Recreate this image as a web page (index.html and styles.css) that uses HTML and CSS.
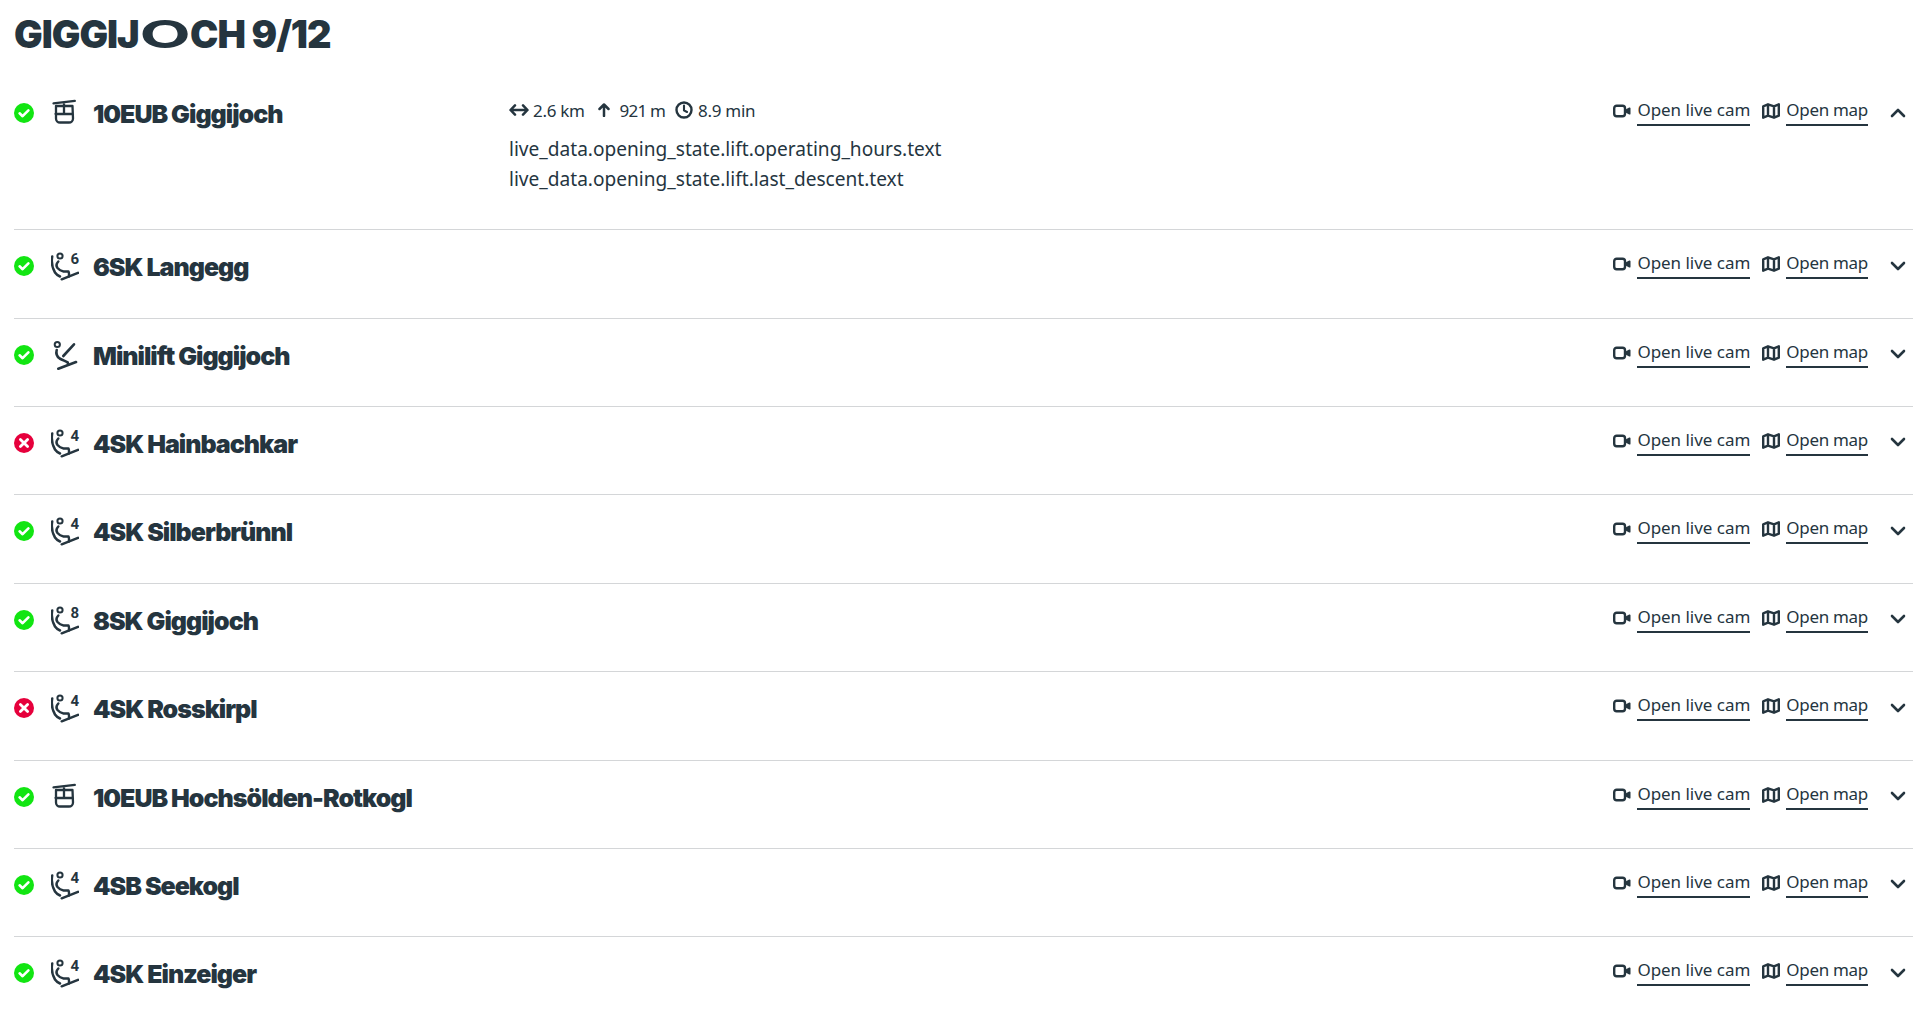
FILE: index.html
```html
<!DOCTYPE html>
<html lang="en">
<head>
<meta charset="utf-8">
<title>Giggijoch</title>
<link rel="stylesheet" href="styles.css">
</head>
<body>
<svg class="defs" width="0" height="0" aria-hidden="true">
  <symbol id="ok" viewBox="0 0 20 20"><circle cx="10" cy="10" r="10" fill="#12e512"/><path d="M5.600 10.300l3 2.900 5.800-5.800" fill="none" stroke="#fff" stroke-width="2.600" stroke-linecap="round" stroke-linejoin="round"/></symbol>
  <symbol id="no" viewBox="0 0 20 20"><circle cx="10" cy="10" r="10" fill="#e6003c"/><path d="M6.400 6.400l7.200 7.200M13.600 6.400l-7.200 7.200" fill="none" stroke="#fff" stroke-width="2.800" stroke-linecap="round"/></symbol>
  <symbol id="gondola" viewBox="0 0 28 30"><g fill="none" stroke="#25353f" stroke-width="2.300" stroke-linecap="round" stroke-linejoin="round"><path d="M2.500 5.400L23.800 2.900M13 4.500V16M5 8h16.500l.5 12.500a4 4 0 0 1-4 4h-9a4 4 0 0 1-4-4zM4.500 16H22"/></g></symbol>
  <symbol id="chair" viewBox="0 0 28 30"><g fill="none" stroke="#25353f" stroke-width="2.500" stroke-linecap="round" stroke-linejoin="round"><circle cx="9" cy="5" r="2.600" stroke-width="2"/><path d="M1.200 5.500C.2 11 .8 16 4 21.500c1.200 1.800 2.800 3 5 4"/><path d="M7.300 10.500C5.500 12.500 5 15 6.500 17c1.500 1.800 4 3 6 3.400l5 .1c.6 1.200.7 3 .5 5"/><path d="M10.700 28.300L27 21.800"/></g></symbol>
  <symbol id="mini" viewBox="0 0 28 30"><g fill="none" stroke="#25353f" stroke-width="2.600" stroke-linecap="round" stroke-linejoin="round"><circle cx="6.300" cy="4.500" r="2.600" stroke-width="2"/><path d="M5.700 10c-.8 3 .2 6.500 3 8.500 2.800 1.500 5.500 2.500 8 3.800l.5 2.500"/><path d="M23 4.300L12.300 16"/><path d="M7.300 28.700L25 22"/></g></symbol>
  <symbol id="cam" viewBox="0 0 18 14"><rect x="1.200" y="1.700" width="10.800" height="10.600" rx="2.500" fill="none" stroke="#25353f" stroke-width="2.400"/><path d="M13 5.200l3.200-1.700a1 1 0 0 1 1.300.8v5.400a1 1 0 0 1-1.300.8L13 8.800z" fill="#25353f"/></symbol>
  <symbol id="map" viewBox="0 0 18 16"><path d="M1.200 3.300l4.800-2 6 2 4.800-2v11.400l-4.800 2-6-2-4.800 2zM6 1.500v11.200M12 3.500v11" fill="none" stroke="#25353f" stroke-width="2.400" stroke-linejoin="round"/></symbol>
  <symbol id="up" viewBox="0 0 16 10"><path d="M2 8l6-6 6 6" fill="none" stroke="#25353f" stroke-width="2.600" stroke-linecap="round" stroke-linejoin="round"/></symbol>
  <symbol id="down" viewBox="0 0 16 10"><path d="M2 2l6 6 6-6" fill="none" stroke="#25353f" stroke-width="2.600" stroke-linecap="round" stroke-linejoin="round"/></symbol>
</svg>
<main class="page">
  <h1 class="title">GIGGIJ<span class="wide-o">O</span>CH 9/12</h1>
  <ul class="lifts">
    <li class="lift lift-open">
      <div class="signs"><svg class="status"><use href="#ok"/></svg><svg class="kind"><use href="#gondola"/></svg></div>
      <h2 class="name">10EUB Giggijoch</h2>
      <div class="details">
        <div class="stats">
          <span class="stat"><svg class="stat-icon" viewBox="0 0 20 14"><path d="M6 2.300L1.500 7 6 11.700M14 2.300L18.500 7 14 11.700M2 7h16" fill="none" stroke="#25353f" stroke-width="2.500" stroke-linecap="round" stroke-linejoin="round"/></svg>2.6 km</span>
          <span class="stat stat-wide"><svg class="stat-icon stat-up" viewBox="0 0 14 14"><path d="M2.500 6L7 1.500 11.500 6M7 2v11" fill="none" stroke="#25353f" stroke-width="2.500" stroke-linecap="round" stroke-linejoin="round"/></svg>921 m</span>
          <span class="stat stat-time"><svg class="stat-icon stat-clock" viewBox="0 0 18 18"><circle cx="9" cy="9" r="7.500" fill="none" stroke="#25353f" stroke-width="2.400"/><path d="M9 4.500v4.800l3 1.700" fill="none" stroke="#25353f" stroke-width="2.100" stroke-linecap="round"/></svg>8.9 min</span>
        </div>
        <p class="note">live_data.opening_state.lift.operating_hours.text</p>
        <p class="note">live_data.opening_state.lift.last_descent.text</p>
      </div>
      <div class="actions"><svg class="cam"><use href="#cam"/></svg><a class="link link-cam">Open live cam</a><svg class="map"><use href="#map"/></svg><a class="link">Open map</a><svg class="chev"><use href="#up"/></svg></div>
    </li>
    <li class="lift">
      <div class="signs"><svg class="status"><use href="#ok"/></svg><span class="kind-wrap"><svg class="kind"><use href="#chair"/></svg><b class="seats">6</b></span></div>
      <h2 class="name">6SK Langegg</h2><div class="details"></div>
      <div class="actions"><svg class="cam"><use href="#cam"/></svg><a class="link link-cam">Open live cam</a><svg class="map"><use href="#map"/></svg><a class="link">Open map</a><svg class="chev"><use href="#down"/></svg></div>
    </li>
    <li class="lift">
      <div class="signs"><svg class="status"><use href="#ok"/></svg><svg class="kind"><use href="#mini"/></svg></div>
      <h2 class="name">Minilift Giggijoch</h2><div class="details"></div>
      <div class="actions"><svg class="cam"><use href="#cam"/></svg><a class="link link-cam">Open live cam</a><svg class="map"><use href="#map"/></svg><a class="link">Open map</a><svg class="chev"><use href="#down"/></svg></div>
    </li>
    <li class="lift">
      <div class="signs"><svg class="status"><use href="#no"/></svg><span class="kind-wrap"><svg class="kind"><use href="#chair"/></svg><b class="seats">4</b></span></div>
      <h2 class="name">4SK Hainbachkar</h2><div class="details"></div>
      <div class="actions"><svg class="cam"><use href="#cam"/></svg><a class="link link-cam">Open live cam</a><svg class="map"><use href="#map"/></svg><a class="link">Open map</a><svg class="chev"><use href="#down"/></svg></div>
    </li>
    <li class="lift">
      <div class="signs"><svg class="status"><use href="#ok"/></svg><span class="kind-wrap"><svg class="kind"><use href="#chair"/></svg><b class="seats">4</b></span></div>
      <h2 class="name">4SK Silberbrünnl</h2><div class="details"></div>
      <div class="actions"><svg class="cam"><use href="#cam"/></svg><a class="link link-cam">Open live cam</a><svg class="map"><use href="#map"/></svg><a class="link">Open map</a><svg class="chev"><use href="#down"/></svg></div>
    </li>
    <li class="lift">
      <div class="signs"><svg class="status"><use href="#ok"/></svg><span class="kind-wrap"><svg class="kind"><use href="#chair"/></svg><b class="seats">8</b></span></div>
      <h2 class="name">8SK Giggijoch</h2><div class="details"></div>
      <div class="actions"><svg class="cam"><use href="#cam"/></svg><a class="link link-cam">Open live cam</a><svg class="map"><use href="#map"/></svg><a class="link">Open map</a><svg class="chev"><use href="#down"/></svg></div>
    </li>
    <li class="lift">
      <div class="signs"><svg class="status"><use href="#no"/></svg><span class="kind-wrap"><svg class="kind"><use href="#chair"/></svg><b class="seats">4</b></span></div>
      <h2 class="name">4SK Rosskirpl</h2><div class="details"></div>
      <div class="actions"><svg class="cam"><use href="#cam"/></svg><a class="link link-cam">Open live cam</a><svg class="map"><use href="#map"/></svg><a class="link">Open map</a><svg class="chev"><use href="#down"/></svg></div>
    </li>
    <li class="lift">
      <div class="signs"><svg class="status"><use href="#ok"/></svg><svg class="kind"><use href="#gondola"/></svg></div>
      <h2 class="name">10EUB Hochsölden-Rotkogl</h2><div class="details"></div>
      <div class="actions"><svg class="cam"><use href="#cam"/></svg><a class="link link-cam">Open live cam</a><svg class="map"><use href="#map"/></svg><a class="link">Open map</a><svg class="chev"><use href="#down"/></svg></div>
    </li>
    <li class="lift">
      <div class="signs"><svg class="status"><use href="#ok"/></svg><span class="kind-wrap"><svg class="kind"><use href="#chair"/></svg><b class="seats">4</b></span></div>
      <h2 class="name">4SB Seekogl</h2><div class="details"></div>
      <div class="actions"><svg class="cam"><use href="#cam"/></svg><a class="link link-cam">Open live cam</a><svg class="map"><use href="#map"/></svg><a class="link">Open map</a><svg class="chev"><use href="#down"/></svg></div>
    </li>
    <li class="lift">
      <div class="signs"><svg class="status"><use href="#ok"/></svg><span class="kind-wrap"><svg class="kind"><use href="#chair"/></svg><b class="seats">4</b></span></div>
      <h2 class="name">4SK Einzeiger</h2><div class="details"></div>
      <div class="actions"><svg class="cam"><use href="#cam"/></svg><a class="link link-cam">Open live cam</a><svg class="map"><use href="#map"/></svg><a class="link">Open map</a><svg class="chev"><use href="#down"/></svg></div>
    </li>
  </ul>
</main>
</body>
</html>
```
FILE: styles.css
```css
* { box-sizing: border-box; }
html, body { margin: 0; height: 100%; overflow: hidden; background: #fff; }
body { color: #25353f; font-family: "Noto Sans", sans-serif; }
.defs { position: absolute; }
.page { padding: 0 9px 0 14px; }
.title {
  margin: 0;
  height: 77px;
  padding-top: 12px;
  font: 900 38px/44px Inter, sans-serif;
  letter-spacing: -1px;
}
.wide-o {
  display: inline-block;
  transform: scaleX(1.75);
  margin: 0 11.500px 0 11.500px;
  font-weight: 700;
}
.lifts { list-style: none; margin: 0; padding: 0; }
.lift {
  display: grid;
  grid-template-columns: 80px 415px 1fr auto;
  align-items: start;
  height: 88.400px;
  padding-top: 20px;
  border-bottom: 1px solid #d4d6d8;
}
.lift:last-child { border-bottom: 0; }
.lift-open { height: 153.200px; }
.signs { display: flex; align-items: center; height: 32px; }
.status { width: 20px; height: 20px; flex: none; }
.kind { width: 28px; height: 30px; flex: none; display: block; }
.signs > .kind, .kind-wrap { margin-left: 17px; }
.kind-wrap { position: relative; display: block; width: 28px; height: 30px; }
.seats {
  position: absolute;
  top: -2px;
  left: 19.500px;
  font: 700 15px/20px Roboto, sans-serif;
}
.name {
  margin: 1px 0 0 -1px;
  font: 900 25px/32px Inter, sans-serif;
  letter-spacing: -1px;
}
.stats { display: flex; gap: 12px; height: 24px; align-items: center; margin-top: 1px; margin-bottom: 12px; font-size: 17px; letter-spacing: -.3px; }
.stat { display: flex; align-items: center; gap: 4px; }
.stat-wide { gap: 9px; letter-spacing: -.8px; }
.stat-time { gap: 5px; margin-left: -2px; }
.stat-icon { width: 20px; height: 14px; }
.stat-up { width: 14px; }
.stat-clock { width: 18px; height: 18px; }
.note { margin: 0; font-size: 19.100px; line-height: 30px; }
.actions { display: flex; align-items: flex-start; margin-top: 1px; font-size: 17px; line-height: 24px; letter-spacing: -.3px; }
.cam { width: 18px; height: 14px; margin: 6px 6px 0 0; }
.map { width: 18px; height: 16px; margin: 5px 6px 0 12px; }
.link { border-bottom: 2px solid #25353f; height: 28px; }
.link-cam { letter-spacing: -.03px; }
.chev { width: 16px; height: 10px; margin: 9.500px 7px 0 22px; }
```
